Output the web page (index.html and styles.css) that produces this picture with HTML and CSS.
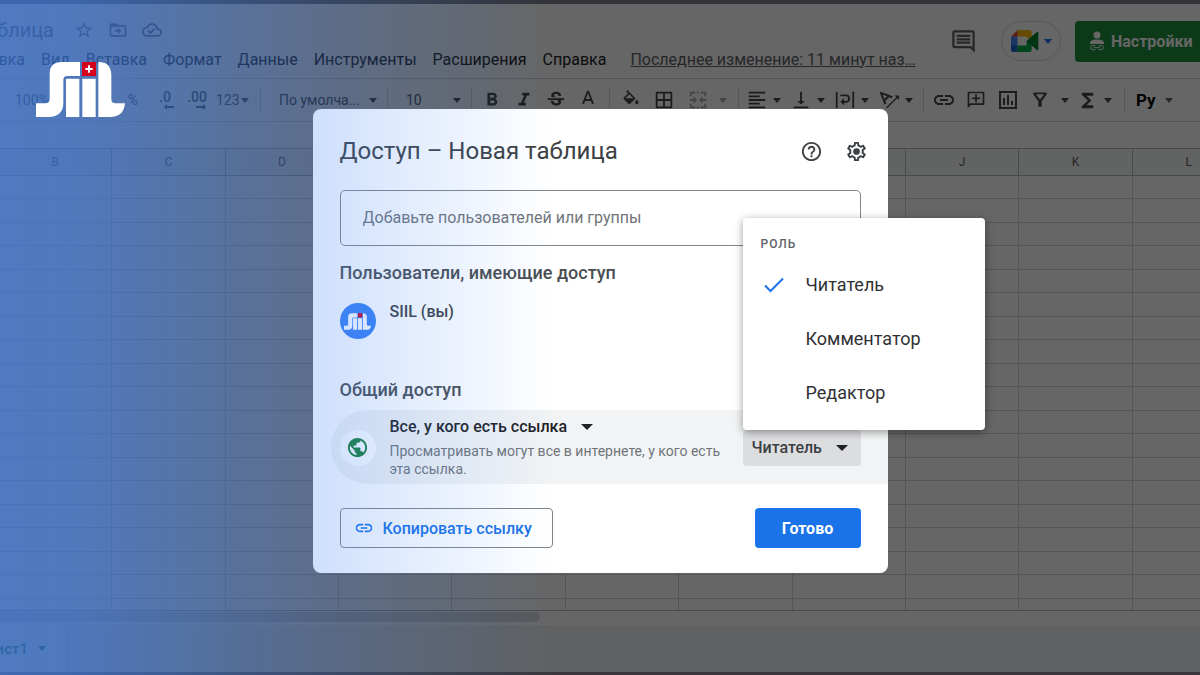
FILE: index.html
```html
<!DOCTYPE html>
<html lang="ru">
<head>
    <meta charset="UTF-8">
    <meta name="viewport" content="width=device-width, initial-scale=1.0">
    <title>Новая таблица</title>
    <link rel="stylesheet" href="styles.css">
</head>
<body>

    <!-- Таблица под затемнением -->
    <div class="app">
        <header class="header">
            <div class="header-left">
                <div class="doc-row">
                    <div class="doc-title"><span>Новая таблица</span></div>
                    <button class="icon-btn" aria-label="Пометить"><svg width="20" height="20" viewBox="0 0 24 24"><path d="M22 9.24l-7.19-.62L12 2 9.19 8.63 2 9.24l5.46 4.73L5.82 21 12 17.27 18.18 21l-1.63-7.03L22 9.24zM12 15.4l-3.76 2.27 1-4.28-3.32-2.88 4.38-.38L12 6.1l1.71 4.04 4.38.38-3.32 2.88 1 4.28L12 15.4z"/></svg></button>
                    <button class="icon-btn" aria-label="Переместить"><svg width="20" height="20" viewBox="0 0 24 24"><path d="M20 6h-8l-2-2H4c-1.1 0-2 .9-2 2v12c0 1.1.9 2 2 2h16c1.1 0 2-.9 2-2V8c0-1.100-.9-2-2-2zm0 12H4V8h16v10zm-8-1l4-4-4-4v3H8v2h4z"/></svg></button>
                    <button class="icon-btn" aria-label="Сохранено"><svg width="20" height="20" viewBox="0 0 24 24"><path d="M19.350 10.040C18.670 6.590 15.640 4 12 4 9.110 4 6.600 5.640 5.350 8.040 2.340 8.360 0 10.910 0 14c0 3.310 2.690 6 6 6h13c2.760 0 5-2.240 5-5 0-2.640-2.050-4.780-4.650-4.960zM19 18H6c-2.210 0-4-1.790-4-4 0-2.050 1.530-3.760 3.560-3.970l1.070-.11.5-.95C8.080 7.140 9.940 6 12 6c2.620 0 4.880 1.860 5.390 4.430l.3 1.500 1.530.11c1.560.1 2.780 1.410 2.780 2.960 0 1.650-1.350 3-3 3zm-9-3.820l-2.090-2.090L6.500 13.500 10 17l6.010-6.010-1.410-1.410z"/></svg></button>
                </div>
                <nav class="menu">
                    <button class="menu-first"><span>Правка</span></button>
                    <button>Вид</button>
                    <button>Вставка</button>
                    <button>Формат</button>
                    <button>Данные</button>
                    <button>Инструменты</button>
                    <button>Расширения</button>
                    <button>Справка</button>
                    <a class="last-edit" href="#">Последнее изменение: 11 минут наз…</a>
                </nav>
            </div>
            <div class="header-right">
                <button class="icon-btn" aria-label="Комментарии"><svg width="27" height="27" viewBox="0 0 24 24"><path d="M21.990 4c0-1.100-.89-2-1.990-2H4c-1.100 0-2 .9-2 2v12c0 1.100.9 2 2 2h14l4 4-.01-18zM20 4v13.170L18.830 16H4V4h16zM6 12h12v2H6zm0-3h12v2H6zm0-3h12v2H6z"/></svg></button>
                <button class="meet-btn" aria-label="Видеовстреча">
                    <svg width="28" height="22" viewBox="0 0 84 66">
                        <path fill="#ea4335" d="M0 20L20 0v20z"/>
                        <path fill="#fbbc04" d="M20 0h36q6 0 6 6v18H46v-4H20z"/>
                        <path fill="#4285f4" d="M0 20h20v26H0z"/>
                        <path fill="#1a5fd0" d="M0 46h20v20H6q-6 0-6-6z"/>
                        <path fill="#00ac47" d="M20 46h26V36l16-16v40q0 6-6 6H20z"/>
                        <path fill="#00832d" d="M46 33l32-27q4-2 4 2v50q0 4-4 2z"/>
                        <path fill="#fff" d="M20 20h26v26H20z"/>
                    </svg>
                    <span class="caret caret-blue"></span>
                </button>
                <button class="access-btn">
                    <svg width="16" height="20" viewBox="0 0 16 20"><circle cx="8" cy="4" r="3.500"/><path d="M1 13v-1.500C1 9 6 8.500 8 8.500s7 .5 7 3V13z"/><path class="stroke" d="M6.500 14.700H3.600a2 2 0 0 0 0 4h2.900M9.500 14.700h2.900a2 2 0 0 1 0 4H9.500M5 16.700h6"/></svg>
                    Настройки
                </button>
            </div>
        </header>

        <div class="toolbar">
            <div class="group group-format">
                <button class="zoom">100%</button>
                <button class="tool">%</button>
                <button class="tool decimals">.0<svg width="10" height="6" viewBox="0 0 10 6"><path d="M0 3l3-3v2h7v2H3v2z"/></svg></button>
                <button class="tool decimals">.00<svg width="10" height="6" viewBox="0 0 10 6"><path d="M10 3L7 0v2H0v2h7v2z"/></svg></button>
                <button class="number">123<span class="caret"></span></button>
            </div>
            <div class="group group-font">
                <select aria-label="Шрифт"><option>По умолча...</option></select><span class="caret"></span>
            </div>
            <div class="group group-size">
                <select aria-label="Размер шрифта"><option>10</option></select><span class="caret"></span>
            </div>
            <div class="group group-text">
                <button class="tool" aria-label="Жирный"><svg width="22" height="22" viewBox="0 0 24 24"><path d="M15.600 10.790c.97-.67 1.650-1.770 1.650-2.790 0-2.260-1.750-4-4-4H7v14h7.040c2.090 0 3.710-1.700 3.710-3.790 0-1.520-.86-2.820-2.150-3.420zM10 6.500h3c.83 0 1.500.67 1.500 1.500s-.67 1.500-1.500 1.500h-3v-3zm3.500 9H10v-3h3.500c.83 0 1.500.67 1.500 1.500s-.67 1.500-1.500 1.500z"/></svg></button>
                <button class="tool" aria-label="Курсив"><svg width="22" height="22" viewBox="0 0 24 24"><path d="M10 4v3h2.210l-3.420 8H6v3h8v-3h-2.210l3.420-8H18V4z"/></svg></button>
                <button class="tool" aria-label="Зачеркнутый"><svg width="22" height="22" viewBox="0 0 24 24"><path d="M7.240 8.750c-.26-.48-.39-1.030-.39-1.670 0-.61.13-1.160.4-1.670.26-.5.63-.93 1.110-1.290a5.730 5.730 0 0 1 1.700-.83c.66-.19 1.390-.29 2.180-.29.81 0 1.540.11 2.210.34.66.22 1.230.54 1.690.94.47.4.83.88 1.080 1.430s.38 1.150.38 1.810h-3.010c0-.31-.05-.59-.15-.85-.09-.27-.24-.49-.44-.68-.2-.19-.45-.33-.75-.44-.3-.1-.66-.16-1.060-.16-.39 0-.74.04-1.030.13s-.53.21-.72.36c-.19.16-.34.34-.44.55-.1.210-.15.430-.15.660 0 .48.25.88.74 1.210.38.25.77.48 1.410.7H7.390c-.05-.08-.11-.17-.15-.25zM21 12v-2H3v2h9.620c.18.07.4.14.55.2.37.17.66.34.87.51s.35.360.43.570c.07.2.11.430.11.690 0 .23-.05.45-.14.66-.09.2-.23.38-.42.53-.19.15-.42.26-.71.35-.29.08-.63.13-1.010.13-.43 0-.83-.04-1.180-.13s-.66-.23-.91-.42c-.25-.19-.45-.44-.59-.75s-.25-.76-.25-1.210H6.400c0 .55.08 1.130.24 1.580s.37.85.65 1.210c.28.35.6.66.98.92.37.26.78.48 1.220.65.44.17.9.3 1.380.39.48.08.96.13 1.440.13.8 0 1.530-.09 2.180-.28s1.210-.45 1.670-.79c.46-.34.82-.77 1.070-1.270s.38-1.070.38-1.710c0-.6-.1-1.140-.31-1.610-.05-.11-.11-.23-.17-.33H21z"/></svg></button>
                <button class="tool" aria-label="Цвет текста"><svg width="22" height="22" viewBox="0 0 24 24"><path d="M11 2L5.500 16h2.250l1.120-3h6.250l1.120 3h2.250L13 2h-2zm-1.380 9L12 4.670 14.380 11H9.620z"/></svg></button>
            </div>
            <div class="group group-cells">
                <button class="tool" aria-label="Заливка"><svg width="20" height="20" viewBox="0 0 24 24"><path d="M16.560 8.940L7.620 0 6.210 1.410l2.380 2.380-5.150 5.150c-.59.59-.59 1.540 0 2.120l5.500 5.500c.29.290.68.440 1.060.440s.77-.15 1.060-.44l5.500-5.500c.59-.58.59-1.530 0-2.120zM5.210 10L10 5.210 14.790 10H5.210zM19 11.500s-2 2.170-2 3.500c0 1.100.9 2 2 2s2-.9 2-2c0-1.330-2-3.500-2-3.500z"/></svg></button>
                <button class="tool" aria-label="Границы"><svg width="22" height="22" viewBox="0 0 24 24"><path d="M3 3v18h18V3H3zm8 16H5v-6h6v6zm0-8H5V5h6v6zm8 8h-6v-6h6v6zm0-8h-6V5h6v6z"/></svg></button>
                <button class="tool tool-off" aria-label="Объединить ячейки" disabled><svg width="22" height="22" viewBox="0 0 24 24"><path d="M3 3h6v2H5v3H3zM11 3h2v2h-2zM15 3h6v5h-2V5h-4zM3 16h2v3h4v2H3zM11 19h2v2h-2zM19 16h2v5h-6v-2h4zM3 11h4V8l4 4-4 4v-3H3zM21 11h-4V8l-4 4 4 4v-3h4z"/></svg><span class="caret"></span></button>
            </div>
            <div class="group group-align">
                <button class="tool-menu" aria-label="Выравнивание"><svg width="22" height="22" viewBox="0 0 24 24"><path d="M15 15H3v2h12v-2zm0-8H3v2h12V7zM3 13h18v-2H3v2zm0 8h18v-2H3v2zM3 3v2h18V3H3z"/></svg><span class="caret"></span></button>
                <button class="tool-menu" aria-label="По вертикали"><svg width="22" height="22" viewBox="0 0 24 24"><path d="M16 13h-3V3h-2v10H8l4 4 4-4zM4 19v2h16v-2H4z"/></svg><span class="caret"></span></button>
                <button class="tool-menu" aria-label="Перенос"><svg width="22" height="22" viewBox="0 0 24 24"><path d="M2 3h2v18H2zM20 3h2v18h-2zM7 6h6a4.500 4.500 0 0 1 0 9h-2v3l-4-4 4-4v3h2a2.500 2.500 0 0 0 0-5H7z"/></svg><span class="caret"></span></button>
                <button class="tool-menu" aria-label="Поворот"><svg width="22" height="22" viewBox="0 0 24 24"><path d="M2 4l1-1 13 5-1 2-3-1-4 4 1 3-2 1zM5 6l2 5 3-3zM9 20L20 9l-2-2h5v5l-2-2-11 11z"/></svg><span class="caret"></span></button>
            </div>
            <div class="group group-insert">
                <button class="tool" aria-label="Ссылка"><svg width="24" height="24" viewBox="0 0 24 24"><path d="M3.900 12c0-1.710 1.390-3.100 3.100-3.100h4V7H7c-2.760 0-5 2.240-5 5s2.240 5 5 5h4v-1.900H7c-1.710 0-3.100-1.390-3.100-3.100zM8 13h8v-2H8v2zm9-6h-4v1.900h4c1.710 0 3.100 1.390 3.100 3.100s-1.390 3.100-3.100 3.100h-4V17h4c2.760 0 5-2.240 5-5s-2.240-5-5-5z"/></svg></button>
                <button class="tool" aria-label="Комментарий"><svg width="20" height="20" viewBox="0 0 24 24"><path d="M22 2H2v20l4-4h16V2zm-2 14H5l-1 1V4h16v12zM11 5h2v4h4v2h-4v4h-2v-4H7V9h4z"/></svg></button>
                <button class="tool" aria-label="Диаграмма"><svg width="24" height="24" viewBox="0 0 24 24"><path d="M3 3v18h18V3H3zm16 16H5V5h14v14zM7 10h2v7H7zM11 7h2v10h-2zM15 13h2v4h-2z"/></svg></button>
                <button class="tool tool-filter" aria-label="Фильтр"><svg width="20" height="20" viewBox="0 0 24 24"><path d="M4 3h16v2.500l-6 8V20h-4v-6.500l-6-8zM7 5l5 6.500L17 5z"/></svg><span class="caret"></span></button>
                <button class="tool-menu" aria-label="Функции"><svg width="23" height="23" viewBox="0 0 24 24"><path d="M18 4H6v2l6.500 6L6 18v2h12v-3h-7l5-5-5-5h7z"/></svg><span class="caret"></span></button>
            </div>
            <div class="group group-lang">
                <button class="lang">Ру<span class="caret"></span></button>
            </div>
        </div>

        <div class="formula-bar"></div>

        <table class="sheet">
            <thead>
                <tr><th>B</th><th>C</th><th>D</th><th></th><th></th><th></th><th></th><th></th><th>J</th><th>K</th><th>L</th></tr>
            </thead>
            <tbody id="rows"></tbody>
        </table>

        <div class="scroll-track"><div class="scroll-thumb"></div></div>
        <footer class="tabs">
            <button class="tab"><span class="tab-name"><span>Лист1</span></span><span class="caret"></span></button>
        </footer>
    </div>

    <!-- Окно доступа -->
    <div class="scrim">
        <section class="dialog" role="dialog" aria-labelledby="dialog-title">
            <div class="dialog-head">
                <h1 id="dialog-title">Доступ – Новая таблица</h1>
                <button class="icon-btn" aria-label="Справка"><svg width="23" height="23" viewBox="0 0 24 24"><path d="M11 18h2v-2h-2v2zm1-16C6.480 2 2 6.480 2 12s4.480 10 10 10 10-4.480 10-10S17.520 2 12 2zm0 18c-4.410 0-8-3.590-8-8s3.590-8 8-8 8 3.590 8 8-3.590 8-8 8zm0-14c-2.210 0-4 1.790-4 4h2c0-1.100.9-2 2-2s2 .9 2 2c0 2-3 1.750-3 5h2c0-2.250 3-2.500 3-5 0-2.210-1.790-4-4-4z"/></svg></button>
                <button class="icon-btn" aria-label="Настройки"><svg width="23" height="23" viewBox="0 0 24 24"><path d="M19.430 12.980c.04-.32.07-.64.07-.98s-.03-.66-.07-.98l2.110-1.650c.19-.15.24-.42.12-.64l-2-3.460c-.12-.22-.39-.3-.61-.22l-2.490 1c-.52-.4-1.080-.73-1.690-.98l-.38-2.650C14.460 2.180 14.250 2 14 2h-4c-.25 0-.46.18-.49.42l-.38 2.650c-.61.25-1.170.59-1.690.98l-2.490-1c-.23-.09-.49 0-.61.22l-2 3.460c-.13.22-.07.49.12.640l2.110 1.650c-.04.32-.07.65-.07.98s.03.66.07.98l-2.110 1.650c-.19.15-.24.42-.12.640l2 3.460c.12.220.39.300.61.220l2.490-1c.52.4 1.080.73 1.690.98l.38 2.650c.03.24.24.42.49.42h4c.25 0 .46-.18.49-.42l.38-2.650c.61-.25 1.170-.59 1.690-.98l2.490 1c.23.09.49 0 .61-.22l2-3.460c.12-.22.07-.49-.12-.64l-2.110-1.650zm-1.980-1.710c.04.31.05.52.05.73s-.02.43-.05.73l-.14 1.130.89.7 1.080.84-.7 1.210-1.270-.51-1.040-.42-.9.68c-.43.320-.84.560-1.250.730l-1.060.43-.16 1.130-.2 1.350h-1.400l-.19-1.350-.16-1.130-1.060-.43c-.43-.18-.83-.41-1.230-.71l-.91-.7-1.060.43-1.270.51-.7-1.210 1.080-.84.89-.7-.14-1.130c-.03-.31-.05-.54-.05-.74s.02-.43.05-.73l.14-1.130-.89-.7-1.080-.84.7-1.210 1.270.51 1.040.42.9-.68c.43-.32.84-.56 1.250-.73l1.060-.43.16-1.130.2-1.350h1.390l.19 1.350.16 1.130 1.060.43c.43.180.83.410 1.230.710l.91.7 1.060-.43 1.270-.51.7 1.210-1.070.85-.89.7.14 1.130z"/><circle cx="12" cy="12" r="3.500"/></svg></button>
            </div>

            <input class="people-input" type="text" aria-label="Добавьте пользователей или группы" placeholder="Добавьте пользователей или группы">

            <h2>Пользователи, имеющие доступ</h2>
            <div class="person">
                <span class="avatar"><svg width="27" height="17" viewBox="0 0 267 165"><use href="#logo-letters"/><path fill="#d5001c" d="M138 0h42v42h-42z"/></svg></span>
                <span class="person-name">SIIL (вы)</span>
            </div>

            <h2>Общий доступ</h2>
            <div class="general">
                <span class="globe"><svg width="23" height="23" viewBox="0 0 24 24"><path d="M12 2C6.480 2 2 6.480 2 12s4.480 10 10 10 10-4.480 10-10S17.520 2 12 2zm-1 17.930c-3.950-.49-7-3.850-7-7.930 0-.62.08-1.210.21-1.790L9 15v1c0 1.100.9 2 2 2v1.930zm6.900-2.540c-.26-.81-1-1.390-1.900-1.390h-1v-3c0-.55-.45-1-1-1H8v-2h2c.55 0 1-.45 1-1V7h2c1.100 0 2-.9 2-2v-.41c2.930 1.190 5 4.060 5 7.410 0 2.080-.8 3.970-2.100 5.390z"/></svg></span>
                <div class="general-text">
                    <div class="scope">
                        <select aria-label="Общий доступ"><option>Все, у кого есть ссылка</option></select><span class="caret caret-big"></span>
                    </div>
                    <p>Просматривать могут все в интернете, у кого есть эта ссылка.</p>
                </div>
                <div class="role">
                    <select aria-label="Роль">
                        <option>Читатель</option>
                        <option>Комментатор</option>
                        <option>Редактор</option>
                    </select>
                    <span class="caret caret-big"></span>
                    <div class="role-menu" role="menu">
                        <div class="role-title">РОЛЬ</div>
                        <button role="menuitemradio" aria-checked="true"><svg width="24" height="24" viewBox="0 0 24 24"><path d="M3 12.500l5.500 5.500L21 5.500"/></svg>Читатель</button>
                        <button role="menuitemradio" aria-checked="false">Комментатор</button>
                        <button role="menuitemradio" aria-checked="false">Редактор</button>
                    </div>
                </div>
            </div>

            <div class="actions">
                <button class="copy-btn"><svg width="20" height="20" viewBox="0 0 24 24"><path d="M3.900 12c0-1.710 1.390-3.100 3.100-3.100h4V7H7c-2.760 0-5 2.240-5 5s2.240 5 5 5h4v-1.900H7c-1.710 0-3.100-1.390-3.100-3.100zM8 13h8v-2H8v2zm9-6h-4v1.900h4c1.710 0 3.100 1.390 3.100 3.100s-1.390 3.100-3.100 3.100h-4V17h4c2.760 0 5-2.240 5-5s-2.240-5-5-5z"/></svg>Копировать ссылку</button>
                <button class="done-btn">Готово</button>
            </div>
        </section>
    </div>

    <!-- Синий градиент и логотип поверх всего -->
    <div class="tint"></div>
    <svg class="logo" role="img" aria-label="SIIL" width="89" height="55" viewBox="0 0 267 165">
        <g id="logo-letters" fill="#fff">
            <path d="M0 124h28q13 0 13-13V36Q41 0 77 0h55v42H94q-12 0-12 12v67q0 44-44 44H0z"/>
            <path d="M90 50h40v115H90zM139 50h40v115h-40z"/>
            <path d="M187 0q39 0 39 40v71q0 13 13 13h28q-4 41-44 41h-36z"/>
        </g>
        <path fill="#d5001c" d="M138 0h42v42h-42z"/>
        <path fill="#fff" d="M156 10h6v8h8v6h-8v8h-6v-8h-8v-6h8z"/>
    </svg>

    <script>
        // Пустые строки таблицы
        const rows = document.getElementById("rows");

        for (let r = 0; r < 19; r++) {
            const row = document.createElement("tr");
            for (let c = 0; c < 11; c++) {
                row.appendChild(document.createElement("td"));
            }
            rows.appendChild(row);
        }
    </script>

</body>
</html>
```
FILE: styles.css
```css
/* Общие стили */
* {
    box-sizing: border-box;
}

body {
    margin: 0;
    height: 100vh;
    overflow: hidden;
    position: relative;
    font-family: Roboto, Arial, sans-serif;
    color: #202124;
}

button,
select,
input {
    font-family: inherit;
    font-size: inherit;
    color: inherit;
    background: none;
    border: none;
    margin: 0;
    padding: 0;
}

button {
    cursor: pointer;
    white-space: nowrap;
}

select {
    appearance: none;
    cursor: pointer;
}

svg {
    display: block;
    flex: none;
    fill: currentColor;
}

.icon-btn {
    display: flex;
    color: #5f6368;
}

.caret {
    flex: none;
    border: 4px solid transparent;
    border-top: 5px solid currentColor;
    border-bottom: 0;
}

.caret-blue {
    border-top-color: #1a73e8;
}

.caret-big {
    border-width: 6px 6px 0;
    pointer-events: none;
}

/* Таблица */
.app {
    height: 100%;
    display: flex;
    flex-direction: column;
    background-color: #fff;
    border-top: 4px solid #80828c;
    border-bottom: 3px solid #918c96;
}

.header {
    flex: none;
    height: 75px;
    display: flex;
    justify-content: space-between;
    border-bottom: 1px solid #d5d7da;
    overflow: hidden;
}

.header-left {
    padding-top: 12px;
}

.doc-row {
    height: 28px;
    display: flex;
    align-items: center;
    gap: 14px;
    color: #5f6368;
}

.doc-title {
    width: 60px;
    padding-right: 6px;
    display: flex;
    justify-content: flex-end;
    font-size: 20px;
    white-space: nowrap;
}

.menu {
    display: flex;
    align-items: center;
    gap: 16px;
    height: 30px;
    font-size: 16px;
}

.menu-first {
    width: 25px;
    display: flex;
    justify-content: flex-end;
}

.last-edit {
    margin-left: 8px;
    color: #5f6368;
    white-space: nowrap;
}

.header-right {
    flex: none;
    display: flex;
    align-items: center;
    gap: 14px;
    margin-right: -70px;
}

.header-right .icon-btn {
    margin-right: 10px;
}

.meet-btn {
    height: 40px;
    width: 60px;
    display: flex;
    align-items: center;
    justify-content: center;
    gap: 5px;
    border: 1px solid #dadce0;
    border-radius: 20px;
}

.access-btn {
    width: 195px;
    height: 41px;
    padding-left: 14px;
    display: flex;
    align-items: center;
    gap: 6px;
    background-color: #1e8e3e;
    color: #fff;
    border-radius: 4px;
    font-size: 16px;
    font-weight: 700;
}

.access-btn .stroke {
    fill: none;
    stroke: currentColor;
}

/* Панель инструментов */
.toolbar {
    flex: none;
    height: 43px;
    display: flex;
    align-items: center;
    border-bottom: 1px solid #d5d7da;
    color: #444746;
    font-size: 14px;
}

.group {
    flex: none;
    height: 24px;
    display: flex;
    align-items: center;
    border-left: 1px solid #d5d7da;
}

.tool {
    width: 32px;
    display: flex;
    align-items: center;
    justify-content: center;
}

.tool-menu {
    width: 44px;
    display: flex;
    align-items: center;
    gap: 5px;
    padding-left: 2px;
}

.tool-off {
    color: #a9abae;
}

.group-format {
    width: 260px;
    padding-left: 15px;
    border-left: none;
}

.zoom {
    width: 102px;
    text-align: left;
}

.decimals {
    flex-direction: column;
    align-items: center;
    line-height: 14px;
    height: 16px;
    font-weight: 500;
}

.decimals svg {
    margin-left: 8px;
}

.number {
    display: flex;
    align-items: center;
    gap: 1px;
    margin-left: 3px;
}

.group-font {
    width: 127px;
    padding: 0 10px 0 18px;
    justify-content: space-between;
}

.group-size {
    width: 84px;
    padding: 0 10px 0 18px;
    justify-content: space-between;
}

.group-text {
    width: 138px;
    padding-left: 4px;
}

.group-cells {
    width: 129px;
    padding-left: 5px;
    gap: 1px;
}

.group-cells .tool-off {
    width: 52px;
    gap: 10px;
}

.group-align {
    width: 185px;
    padding-left: 5px;
}

.group-insert {
    width: 201px;
    padding-left: 4px;
}

.group-insert .tool-filter {
    width: 50px;
    gap: 11px;
}

.group-lang {
    padding-left: 11px;
}

.lang {
    display: flex;
    align-items: center;
    gap: 9px;
    font-size: 17px;
    font-weight: 700;
    color: #000;
}

.lang .caret {
    border-top-color: #5f6368;
}

.formula-bar {
    flex: none;
    height: 26px;
}

/* Ячейки */
.sheet {
    flex: none;
    width: 104%;
    margin-left: -2px;
    table-layout: fixed;
    border-collapse: collapse;
}

.sheet th {
    height: 27px;
    padding: 0;
    font-size: 12px;
    font-weight: 400;
    color: #5f6368;
    background-color: #f5f7f8;
    border: 1px solid #b5b7ba;
}

.sheet td {
    height: 23px;
    padding: 0;
    border: 1px solid #d3d4d6;
}

.sheet tr:nth-child(even) td {
    height: 24px;
}

/* Последняя строка видна наполовину */
.sheet tbody tr:last-child td {
    height: 12px;
    border-bottom-color: #b5b7ba;
}

.scroll-track {
    flex: 1;
    min-height: 12px;
    padding-top: 1px;
}

.scroll-thumb {
    width: 45%;
    height: 10px;
    background-color: #dadce0;
    border-radius: 0 5px 5px 0;
}

.tabs {
    flex: none;
    height: 47px;
    background-color: #f1f3f4;
}

.tab {
    height: 100%;
    width: 67px;
    display: flex;
    align-items: center;
    gap: 10px;
    background-color: #fff;
    border-right: 1px solid #dadce0;
    color: #188038;
    font-size: 15px;
    font-weight: 500;
}

.tab-name {
    width: 28px;
    display: flex;
    justify-content: flex-end;
}

/* Окно доступа */
.scrim {
    position: absolute;
    inset: 0;
    display: flex;
    align-items: center;
    justify-content: center;
    padding-top: 7px;
    background-color: rgba(0, 0, 0, 0.6);
}

.dialog {
    width: 575px;
    padding: 26px 27px 25px;
    background-color: #fff;
    border-radius: 8px;
}

.dialog-head {
    display: flex;
    align-items: center;
    gap: 22px;
    margin: 0 -7px 23px 0;
}

.dialog-head .icon-btn {
    color: #3c4043;
}

h1 {
    flex: 1;
    margin: 0;
    font-size: 24px;
    line-height: 32px;
    font-weight: 400;
    color: #3c4043;
}

h2 {
    margin: 0;
    font-size: 18px;
    line-height: 24px;
    font-weight: 500;
    color: #4a4e52;
}

.people-input {
    display: block;
    width: 100%;
    height: 56px;
    padding: 0 22px 2px;
    margin-bottom: 15px;
    border: 1px solid #80868b;
    border-radius: 5px;
    font-size: 16px;
}

.people-input::placeholder {
    color: #70757a;
}

.person {
    display: flex;
    gap: 14px;
    margin: 18px 0 39px;
}

.avatar,
.globe {
    flex: none;
    width: 36px;
    height: 36px;
    display: flex;
    align-items: center;
    justify-content: center;
    border-radius: 50%;
}

.avatar {
    background-color: #3b82f6;
}

.person-name {
    font-size: 16px;
    line-height: 18px;
    font-weight: 500;
    color: #3c4043;
}

.general {
    display: flex;
    align-items: center;
    gap: 14px;
    margin: 8px -27px 24px -9px;
    padding: 7px 27px 6px 9px;
    background-color: #f1f3f4;
    border-radius: 37px 0 0 37px;
}

.globe {
    background-color: #fff;
    color: #188038;
}

.general-text {
    flex: 1;
}

.scope {
    display: flex;
    align-items: center;
    gap: 13px;
    font-size: 16px;
    line-height: 20px;
    font-weight: 500;
}

.scope select {
    font-weight: 500;
}

.general p {
    margin: 6px 0 0;
    font-size: 14px;
    line-height: 18px;
    color: #70757a;
}

.role {
    position: relative;
    flex: none;
    width: 118px;
    display: flex;
    align-items: center;
}

.role select {
    width: 100%;
    height: 36px;
    padding-left: 9px;
    background-color: #dcdddf;
    border-radius: 4px;
    font-size: 16px;
    font-weight: 500;
    color: #3c4043;
}

.role .caret {
    position: absolute;
    right: 13px;
}

.role-menu {
    position: absolute;
    left: 0;
    bottom: 100%;
    width: 242px;
    padding: 12px 0 10px;
    background-color: #fff;
    border-radius: 4px;
    box-shadow: 0 2px 8px rgba(0, 0, 0, 0.4);
}

.role-title {
    padding-left: 18px;
    font-size: 12px;
    line-height: 28px;
    font-weight: 500;
    letter-spacing: 1px;
    color: #5f6368;
}

.role-menu button {
    width: 100%;
    height: 54px;
    padding-left: 63px;
    display: flex;
    align-items: center;
    font-size: 18px;
    color: #303134;
}

.role-menu svg {
    margin: 0 20px 0 -44px;
    fill: none;
    stroke: #1a73e8;
    stroke-width: 2;
}

.actions {
    display: flex;
    justify-content: space-between;
}

.copy-btn,
.done-btn {
    height: 40px;
    display: flex;
    align-items: center;
    justify-content: center;
    border-radius: 4px;
    font-size: 16px;
    font-weight: 500;
}

.copy-btn {
    gap: 9px;
    padding: 0 20px 0 13px;
    border: 1px solid #80868b;
    color: #1a73e8;
}

.done-btn {
    width: 106px;
    background-color: #1a73e8;
    color: #fff;
    font-weight: 700;
}

/* Градиент и логотип */
.tint {
    position: absolute;
    inset: 0;
    background: linear-gradient(to right, rgba(66, 133, 244, 0.64), rgba(66, 133, 244, 0.61) 6%, rgba(66, 133, 244, 0.26) 26%, rgba(66, 133, 244, 0) 46%);
    pointer-events: none;
}

.logo {
    position: absolute;
    left: 36px;
    top: 62px;
}
```
